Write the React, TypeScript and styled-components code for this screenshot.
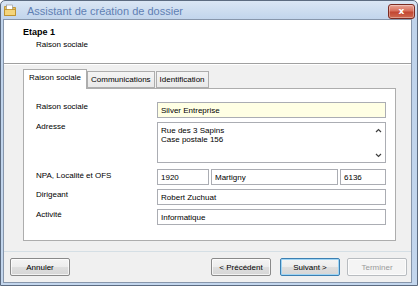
import React from "react";
import styled, { createGlobalStyle } from "styled-components";

const Global = createGlobalStyle`
  html, body { margin: 0; padding: 0; background: #ffffff; }
  * { box-sizing: border-box; }
`;

const UI = `"Liberation Sans", Arial, sans-serif`;

const Window = styled.div`
  width: 418px;
  height: 286px;
  display: flex;
  flex-direction: column;
  border: 1px solid #5c6b80;
  border-radius: 5px 5px 0 0;
  background: linear-gradient(#dae6f4, #bfd3eb 20px, #c3d6ed);
  overflow: hidden;
  font-family: ${UI};
`;

const TitleBar = styled.div`
  height: 18px;
  flex: none;
  display: flex;
  align-items: center;
  padding: 0 2px 0 3px;
`;

const TitleText = styled.div`
  margin-left: 11px;
  font-family: ${UI};
  font-size: 11px;
  color: #5f80b4;
  padding-top: 1px;
`;

const CloseButton = styled.div`
  margin-left: auto;
  margin-top: 2px;
  width: 27px;
  height: 15px;
  border: 1px solid #7b2b22;
  border-radius: 3px;
  background: linear-gradient(#e9a597, #d7705d 45%, #c24632 55%, #cf6b52);
  display: flex;
  align-items: center;
  justify-content: center;
  color: #ffffff;
  font-family: "DejaVu Sans", sans-serif;
  font-weight: bold;
  font-size: 9px;
  line-height: 1;
  box-shadow: inset 0 0 0 1px rgba(255, 255, 255, 0.35);
`;

const Client = styled.div`
  flex: 1;
  margin: 0 5px 2px 2px;
  border: 1px solid #8796ab;
  background: #f0f0f0;
  display: flex;
  flex-direction: column;
`;

const Header = styled.div`
  height: 44px;
  flex: none;
  background: #ffffff;
  border-bottom: 1px solid #a0a0a0;
  padding: 7px 0 0 19px;
`;

const StepTitle = styled.div`
  font-size: 9px;
  font-weight: bold;
  color: #000;
  line-height: 11px;
`;

const StepSub = styled.div`
  font-size: 8px;
  color: #000;
  margin: 2px 0 0 13px;
  line-height: 10px;
`;

const Body = styled.div`
  flex: 1;
  padding: 3px 15px 0 19px;
  border-top: 1px solid #ffffff;
  display: flex;
  flex-direction: column;
`;

const TabStrip = styled.div`
  display: flex;
  align-items: flex-end;
  height: 20px;
  position: relative;
  z-index: 1;
`;

const Tab = styled.div<{ $active?: boolean }>`
  height: ${(p) => (p.$active ? "20px" : "17px")};
  padding: 0 ${(p) => (p.$active ? "5px" : "3px")};
  margin-right: ${(p) => (p.$active ? "0" : "1px")};
  border: 1px solid #adadad;
  border-bottom: ${(p) => (p.$active ? "none" : "1px solid #adadad")};
  background: ${(p) => (p.$active ? "#ffffff" : "linear-gradient(#f4f4f4, #e9e9e9)")};
  font-size: 8px;
  color: #000;
  display: flex;
  align-items: center;
  justify-content: center;
  padding-bottom: ${(p) => (p.$active ? "4px" : "1px")};
  margin-bottom: ${(p) => (p.$active ? "-1px" : "0")};
`;

const Panel = styled.div`
  height: 153px;
  background: #ffffff;
  border: 1px solid #adadad;
  padding: 13px 9px 0 12px;
  display: grid;
  grid-template-columns: 121px 1fr;
  row-gap: 4px;
  align-content: start;
`;

const Label = styled.div<{ $pad?: number }>`
  font-size: 8px;
  color: #000;
  padding-top: ${(p) => p.$pad ?? 1}px;
  line-height: 10px;
`;

const Field = styled.div<{ $yellow?: boolean; $h?: number; $w?: number }>`
  height: ${(p) => p.$h ?? 16}px;
  ${(p) => (p.$w ? `width: ${p.$w}px; flex: none;` : "flex: 1;")}
  border: 1px solid #abadb3;
  background: ${(p) => (p.$yellow ? "#ffffe4" : "#ffffff")};
  font-size: 8px;
  color: #000;
  padding: 3px 0 0 3px;
  line-height: 9px;
  position: relative;
`;

const Row = styled.div`
  display: flex;
  gap: 2px;
  margin-top: 2px;
`;

const ScrollBar = styled.div`
  position: absolute;
  right: 1px;
  top: 1px;
  bottom: 1px;
  width: 11px;
  display: flex;
  flex-direction: column;
  justify-content: space-between;
  align-items: center;
  padding: 4px 0 3px;
`;

const Footer = styled.div`
  height: 31px;
  flex: none;
  border-top: 1px solid #d5dfe5;
  display: flex;
  align-items: center;
  padding: 0 4px 0 6px;
`;

const Button = styled.div<{ $focus?: boolean; $disabled?: boolean }>`
  width: 60px;
  height: 18px;
  border: 1px solid ${(p) => (p.$focus ? "#3c7fb1" : p.$disabled ? "#b8bcc0" : "#8a8a8a")};
  border-radius: 2px;
  background: ${(p) =>
    p.$disabled ? "#f4f4f4" : "linear-gradient(#f4f4f4, #ececec 50%, #dedede 51%, #d6d6d6)"};
  box-shadow: ${(p) => (p.$focus ? "inset 0 0 0 1px #9fd5f5" : "inset 0 0 0 1px rgba(255,255,255,0.7)")};
  font-size: 8px;
  color: ${(p) => (p.$disabled ? "#9a9a9a" : "#000")};
  display: flex;
  align-items: center;
  justify-content: center;
  margin-left: ${(p) => (p.$focus ? "9px" : p.$disabled ? "7px" : "0")};
`;

const Grow = styled.div`
  flex: 1;
`;

const Chevron = ({ up }: { up?: boolean }) => (
  <svg width="7" height="5" viewBox="0 0 7 5">
    <path
      d={up ? "M1 4 L3.5 1.5 L6 4" : "M1 1 L3.5 3.5 L6 1"}
      fill="none"
      stroke="#404040"
      strokeWidth="1.2"
    />
  </svg>
);

const AppIcon = () => (
  <svg width="12" height="12" viewBox="0 0 12 12">
    <path d="M0.5 2.5 h4 l1 1 h6 v8 h-11 z" fill="#e9c15a" stroke="#b98a24" strokeWidth="0.8" />
    <rect x="2.5" y="1" width="6" height="7" fill="#ffffff" stroke="#8a8a8a" strokeWidth="0.6" />
    <path d="M0.5 5.5 h11 v6 h-11 z" fill="#f4d57c" stroke="#b98a24" strokeWidth="0.8" />
  </svg>
);

export default function App() {
  return (
    <>
      <Global />
      <Window>
        <TitleBar>
          <AppIcon />
          <TitleText>Assistant de création de dossier</TitleText>
          <CloseButton>x</CloseButton>
        </TitleBar>
        <Client>
          <Header>
            <StepTitle>Etape 1</StepTitle>
            <StepSub>Raison sociale</StepSub>
          </Header>
          <Body>
            <TabStrip>
              <Tab $active>Raison sociale</Tab>
              <Tab>Communications</Tab>
              <Tab>Identification</Tab>
            </TabStrip>
            <Panel>
              <Label $pad={0}>Raison sociale</Label>
              <Field $yellow>Silver Entreprise</Field>
              <Label $pad={0}>Adresse</Label>
              <Field $h={41}>
                Rue des 3 Sapins
                <br />
                Case postale 156
                <ScrollBar>
                  <Chevron up />
                  <Chevron />
                </ScrollBar>
              </Field>
              <Label $pad={4}>NPA, Localité et OFS</Label>
              <Row>
                <Field $w={52}>1920</Field>
                <Field>Martigny</Field>
                <Field $w={46}>6136</Field>
              </Row>
              <Label>Dirigeant</Label>
              <Field>Robert Zuchuat</Field>
              <Label>Activité</Label>
              <Field>Informatique</Field>
            </Panel>
          </Body>
          <Footer>
            <Button>Annuler</Button>
            <Grow />
            <Button>&lt; Précédent</Button>
            <Button $focus>Suivant &gt;</Button>
            <Button $disabled>Terminer</Button>
          </Footer>
        </Client>
      </Window>
    </>
  );
}
